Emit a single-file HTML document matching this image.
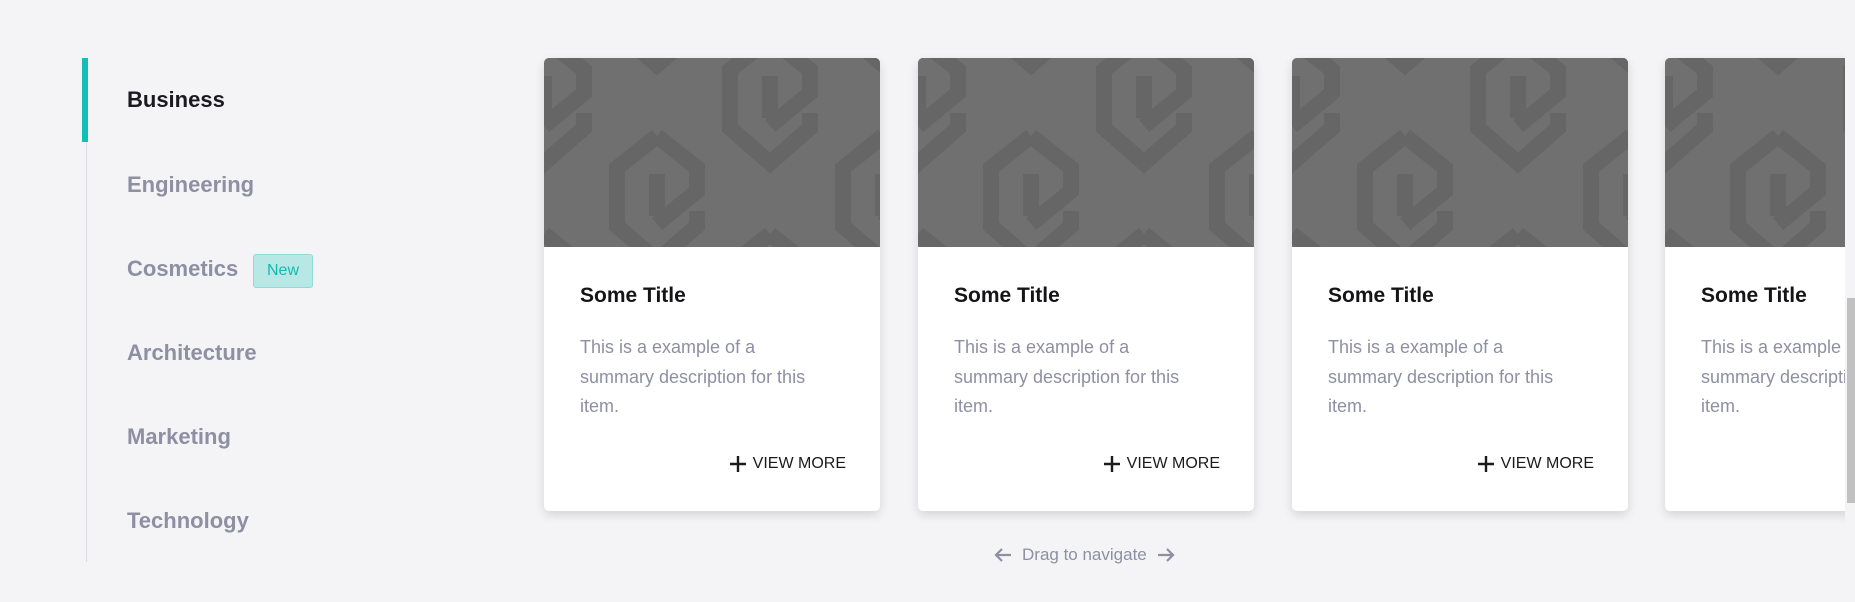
<!DOCTYPE html>
<html><head><meta charset="utf-8"><style>
*{margin:0;padding:0;box-sizing:border-box}
body{width:1855px;height:602px;background:#f4f4f6;font-family:"Liberation Sans",sans-serif;position:relative;overflow:hidden}
.wrap{position:absolute;left:0;top:0;width:1845px;height:602px;overflow:hidden}
.line{position:absolute;left:86px;top:58px;width:1px;height:504px;background:#dcdce2}
.bar{position:absolute;left:82px;top:58px;width:6px;height:84px;background:#13bfb5}
.nav{position:absolute;left:127px;font-size:22px;font-weight:bold;color:#8e8fa3;line-height:24px}
.nav.a{color:#1b1b1f}
.badge{position:absolute;left:253px;top:254px;width:60px;height:34px;background:#b7e8e6;border:1px solid #8fdcd7;border-radius:3px;color:#13b8ad;font-size:16px;text-align:center;line-height:32px}
.card{position:absolute;top:58px;width:336px;height:453px;background:#fff;border-radius:5px;overflow:hidden;box-shadow:0 4px 10px rgba(0,0,0,.13)}
.img{display:block;height:189px;background:#707070}
.o{position:absolute;top:0;width:336px;height:0}
.t{position:absolute;left:36px;top:284px;font-size:21px;font-weight:bold;color:#151518}
.d{position:absolute;left:36px;top:333px;white-space:nowrap;font-size:18px;line-height:29.5px;color:#8e8fa3}
.v{position:absolute;right:34px;top:455px;font-size:16px;color:#1b1b1f;display:flex;align-items:center;gap:6px}
.drag{position:absolute;left:994px;top:545px;font-size:17px;color:#8e8fa3;display:flex;align-items:center;gap:10px}
.th{position:absolute;left:1847px;top:298px;width:8px;height:205px;background:#c1c1c1}
</style></head><body>
<div class="wrap">
<div class="line"></div><div class="bar"></div>
<div class="nav a" style="top:88px">Business</div>
<div class="nav" style="top:173px">Engineering</div>
<div class="nav" style="top:257px">Cosmetics</div>
<div class="badge">New</div>
<div class="nav" style="top:341px">Architecture</div>
<div class="nav" style="top:425px">Marketing</div>
<div class="nav" style="top:509px">Technology</div>

<svg width="0" height="0" style="position:absolute"><defs>
<pattern id="p" width="226" height="196" patternUnits="userSpaceOnUse" x="-60" y="-40">
<g fill="none" stroke="#666" stroke-width="16">
<path d="M60 20 L100 52 L100 75 L60 108 M60 20 L20 52 L20 110 L60 145 L100 110 L100 95 M60 58 L60 100"/>
<path d="M173 118 L213 150 L213 173 L173 206 M173 118 L133 150 L133 208 L173 243 L213 208 L213 193 M173 156 L173 198"/>
<path d="M173 -78 L213 -46 L213 -23 L173 10 M173 -78 L133 -46 L133 12 L173 47 L213 12 L213 -3 M173 -40 L173 2"/>
</g></pattern></defs></svg>

<div class="card" style="left:544px"><svg class="img" width="336" height="189"><rect width="336" height="189" fill="#707070"/><rect width="336" height="189" fill="url(#p)"/></svg></div>
<div class="card" style="left:918px"><svg class="img" width="336" height="189"><rect width="336" height="189" fill="#707070"/><rect width="336" height="189" fill="url(#p)"/></svg></div>
<div class="card" style="left:1292px"><svg class="img" width="336" height="189"><rect width="336" height="189" fill="#707070"/><rect width="336" height="189" fill="url(#p)"/></svg></div>
<div class="card" style="left:1665px"><svg class="img" width="336" height="189"><rect width="336" height="189" fill="#707070"/><rect width="336" height="189" fill="url(#p)"/></svg></div>

<div class="o" style="left:544px"><div class="t">Some Title</div><div class="d">This is a example of a<br>summary description for this<br>item.</div>
<div class="v"><svg width="18" height="18"><path d="M9 1V17M1 9H17" stroke="#1b1b1f" stroke-width="2.4"/></svg>VIEW MORE</div></div>
<div class="o" style="left:918px"><div class="t">Some Title</div><div class="d">This is a example of a<br>summary description for this<br>item.</div>
<div class="v"><svg width="18" height="18"><path d="M9 1V17M1 9H17" stroke="#1b1b1f" stroke-width="2.4"/></svg>VIEW MORE</div></div>
<div class="o" style="left:1292px"><div class="t">Some Title</div><div class="d">This is a example of a<br>summary description for this<br>item.</div>
<div class="v"><svg width="18" height="18"><path d="M9 1V17M1 9H17" stroke="#1b1b1f" stroke-width="2.4"/></svg>VIEW MORE</div></div>
<div class="o" style="left:1665px"><div class="t">Some Title</div><div class="d">This is a example of a<br>summary description for this<br>item.</div></div>

<div class="drag"><svg width="18" height="16"><path d="M17 8H2M8 2L2 8L8 14" fill="none" stroke="#8e8fa3" stroke-width="2.2"/></svg>Drag to navigate<svg width="18" height="16"><path d="M1 8H16M10 2L16 8L10 14" fill="none" stroke="#8e8fa3" stroke-width="2.2"/></svg></div>
</div>
<div class="th"></div>
</body></html>
